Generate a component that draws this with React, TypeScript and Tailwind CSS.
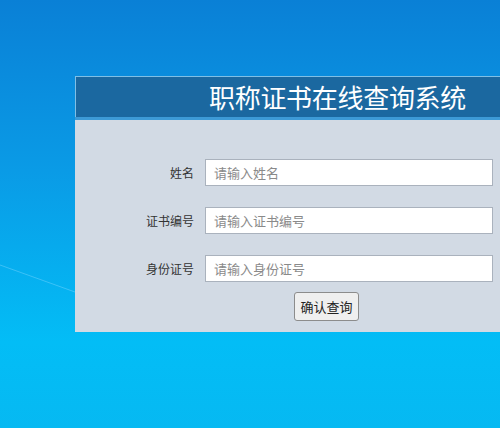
export default function App() {
  const fields = [
    { label: '姓名', placeholder: '请输入姓名' },
    { label: '证书编号', placeholder: '请输入证书编号' },
    { label: '身份证号', placeholder: '请输入身份证号' },
  ]

  return (
    <div
      className="relative h-[428px] w-[500px] overflow-hidden bg-[linear-gradient(180deg,#0a80d6_0%,#0a9be6_40%,#03bdf6_80%,#06b9f2_100%)] pt-[76px] pl-[75px]"
      style={{ fontFamily: '"Microsoft YaHei", "Noto Sans CJK SC", sans-serif' }}
    >
      <svg className="pointer-events-none absolute top-0 left-0" width="500" height="428">
        <line x1="0" y1="265" x2="75" y2="292" stroke="#7fd6ff" strokeOpacity="0.45" strokeWidth="1" />
      </svg>

      <div className="relative w-[440px]">
        <div className="flex h-[41px] items-center border-t border-l border-[#7fbfe6] bg-[#1b68a0] pl-[133px]">
          <h1 className="text-[26px] leading-none tracking-[-0.3px] text-white">职称证书在线查询系统</h1>
        </div>
        <div className="h-[3px] bg-[#3d9ad6]" />
        <div className="flex h-[212px] flex-col bg-[#d2dae4] pt-[39px]">
          <div className="flex flex-col gap-[21px]">
            {fields.map((f) => (
              <div key={f.label} className="flex items-center">
                <label className="w-[130px] pr-[11px] text-right text-[12px] text-[#333]">{f.label}</label>
                <input
                  className="h-[27px] w-[288px] border border-[#aab2bd] bg-white px-[8px] text-[13px] text-[#333] outline-none placeholder:text-[#8a8a8a]"
                  placeholder={f.placeholder}
                />
              </div>
            ))}
          </div>
          <div className="mt-[10px] pl-[219px]">
            <button className="h-[29px] w-[65px] rounded-[3px] border border-[#8c8c8c] bg-[#efefef] text-[13px] text-[#222]">
              确认查询
            </button>
          </div>
        </div>
      </div>
    </div>
  )
}
